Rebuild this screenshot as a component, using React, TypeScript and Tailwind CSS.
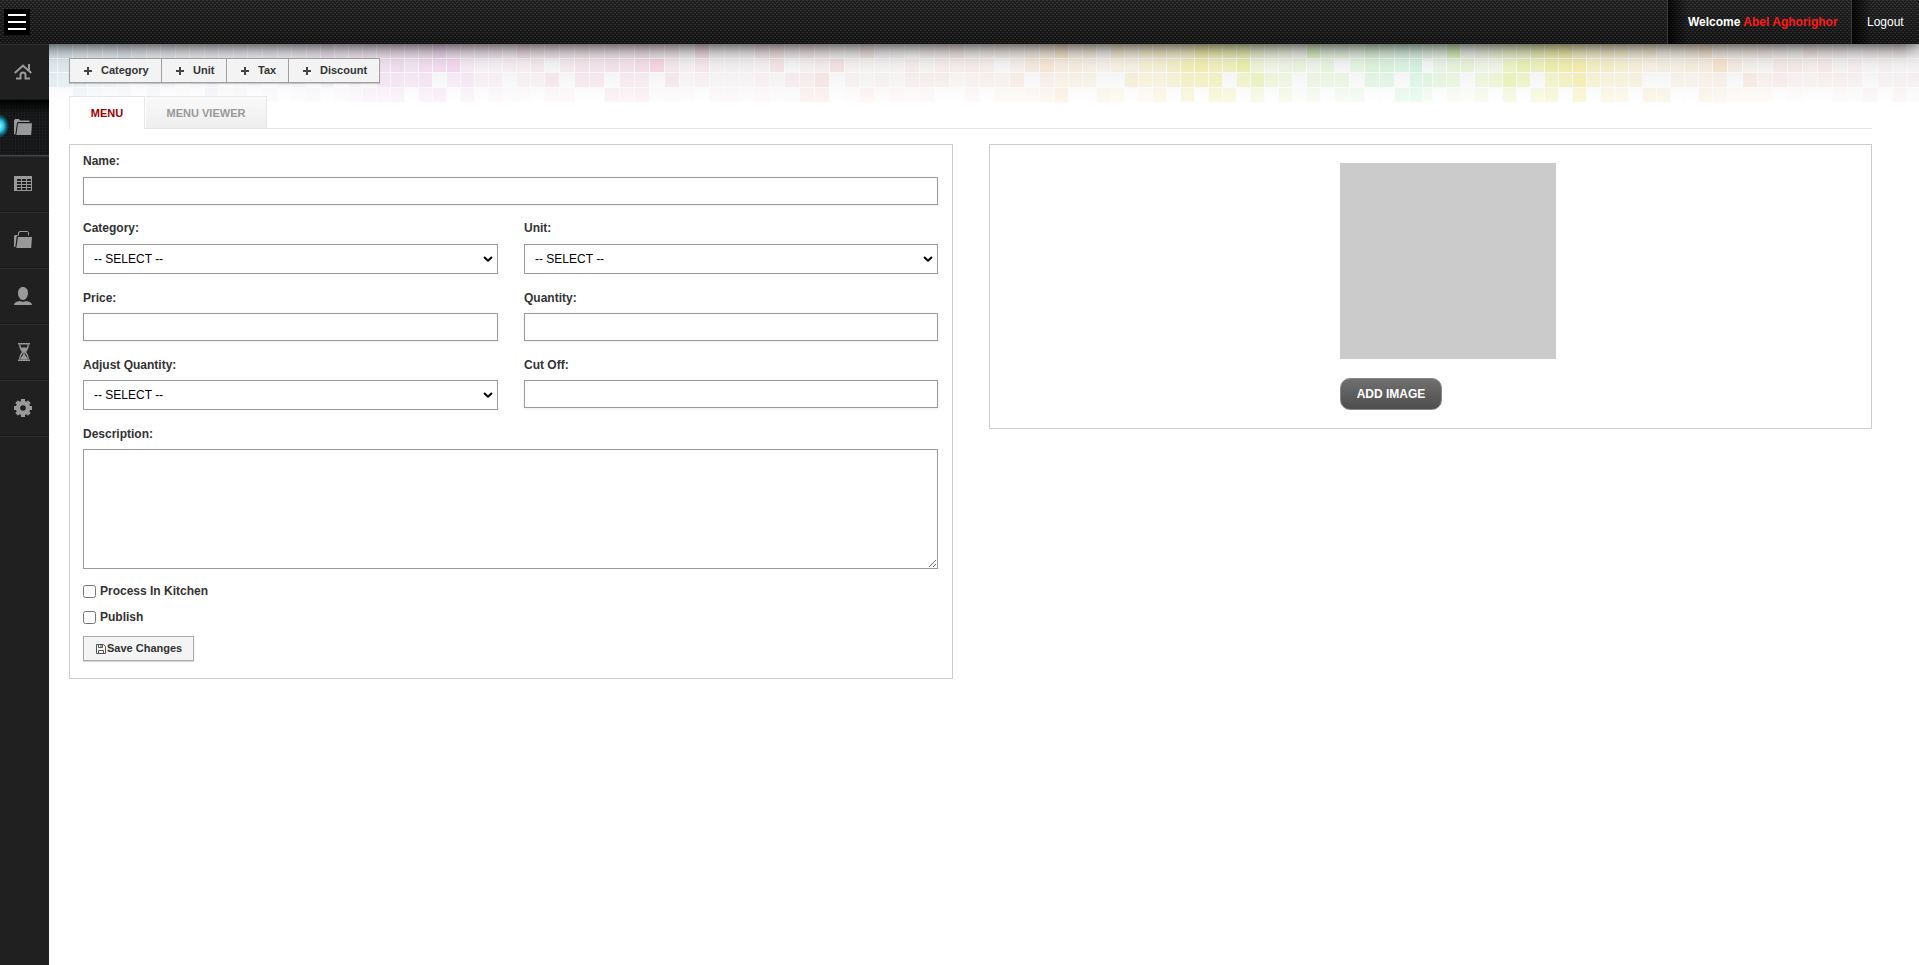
import React from "react";

type Cell = { x: number; y: number; w: number; h: number; fill: string; opacity: number };

const stops: [number, number, number, number][] = [
  [49, 168, 208, 224], [140, 190, 200, 232], [250, 206, 200, 238], [330, 228, 184, 232], [391, 236, 176, 230],
  [447, 240, 172, 228], [517, 244, 176, 206], [650, 242, 166, 196], [800, 242, 176, 176],
  [950, 244, 192, 184], [1040, 246, 200, 148], [1111, 242, 216, 136], [1195, 238, 228, 110],
  [1237, 222, 232, 110], [1279, 204, 236, 140], [1335, 184, 236, 156], [1410, 152, 234, 184],
  [1447, 184, 234, 130], [1503, 212, 236, 110], [1545, 230, 230, 108], [1573, 240, 226, 106],
  [1643, 242, 214, 136], [1713, 246, 200, 148], [1773, 244, 194, 186], [1919, 240, 200, 206],
];

const columns: [number, string][] = [
  [49, "5550"], [58, "5540"], [73, "4443"], [88, "4432"], [103, "4431"], [118, "5422"], [132, "3310"], [147, "2322"],
  [161, "3320"], [176, "2201"], [190, "2210"], [205, "3323"], [219, "2201"], [234, "3312"], [248, "2220"], [263, "3302"],
  [278, "2320"], [292, "3321"], [307, "3402"], [321, "5530"], [335, "3301"], [349, "4422"], [363, "4313"], [377, "4553"],
  [391, "4654"], [405, "4440"], [419, "5654"], [433, "6604"], [447, "4730"], [461, "3343"], [475, "3120"], [489, "3122"],
  [503, "2201"], [517, "5221"], [531, "3320"], [545, "3042"], [560, "3302"], [575, "3440"], [590, "3440"], [605, "3404"],
  [620, "3433"], [635, "4534"], [650, "3701"], [665, "3341"], [680, "1111"], [695, "5320"], [710, "1112"], [725, "1112"],
  [740, "1111"], [755, "3122"], [770, "4411"], [785, "2031"], [800, "3134"], [815, "2254"], [830, "1500"], [845, "1121"],
  [860, "4113"], [875, "1121"], [890, "1112"], [905, "0331"], [920, "2132"], [935, "2330"], [950, "4310"], [965, "1322"],
  [980, "2330"], [995, "2022"], [1010, "2242"], [1025, "3402"], [1040, "4633"], [1055, "7435"], [1069, "3430"],
  [1083, "4330"], [1097, "1203"], [1111, "6303"], [1125, "4350"], [1139, "5542"], [1153, "6544"], [1167, "5650"],
  [1181, "6876"], [1195, "9970"], [1209, "8776"], [1223, "8705"], [1237, "8960"], [1251, "5485"], [1265, "4250"],
  [1279, "3344"], [1293, "1401"], [1307, "8243"], [1321, "4440"], [1335, "4043"], [1350, "3403"], [1365, "6650"],
  [1380, "5650"], [1395, "5505"], [1410, "5655"], [1423, "4053"], [1433, "3350"], [1447, "8442"], [1461, "1401"],
  [1475, "3243"], [1489, "4250"], [1503, "5685"], [1517, "6860"], [1531, "8705"], [1545, "8966"], [1559, "9970"],
  [1573, "6997"], [1587, "5650"], [1601, "6644"], [1615, "5543"], [1629, "4440"], [1643, "5305"], [1657, "2304"],
  [1671, "3330"], [1685, "4420"], [1699, "6434"], [1713, "3733"], [1728, "2402"], [1743, "3252"], [1758, "3132"],
  [1773, "2440"], [1788, "1421"], [1803, "4320"], [1818, "2430"], [1833, "2132"], [1848, "1331"], [1863, "2103"],
  [1878, "2220"], [1893, "4123"], [1908, "1131"], [1923, "0000"],
];

const bands = [
  { y: 0, h: 14, k: 0.06 },
  { y: 15, h: 13, k: 0.058 },
  { y: 29, h: 14, k: 0.052 },
  { y: 44, h: 14, k: 0.038 },
];

function tint(x: number) {
  let i = 0;
  while (i < stops.length - 2 && stops[i + 1][0] < x) i++;
  const a = stops[i];
  const b = stops[i + 1];
  const t = Math.min(1, Math.max(0, (x - a[0]) / (b[0] - a[0])));
  const mix = (n: 1 | 2 | 3) => Math.round(a[n] + (b[n] - a[n]) * t);
  return `rgb(${mix(1)},${mix(2)},${mix(3)})`;
}

const cells: Cell[] = columns.slice(0, -1).flatMap(([x, levels], i) =>
  bands.map((band, r) => ({
    x: x - 49,
    y: band.y,
    w: columns[i + 1][0] - x - 1,
    h: band.h,
    fill: tint(x),
    opacity: Number(levels[r]) * band.k,
  })),
);

function Mosaic() {
  return (
    <svg className="absolute left-0 top-0" width="1870" height="58" shapeRendering="crispEdges" aria-hidden="true">
      <defs>
        <linearGradient id="wash" x1="0" y1="0" x2="0" y2="1">
          <stop offset="0" stopColor="#ececec" />
          <stop offset="0.5" stopColor="#f5f5f5" />
          <stop offset="1" stopColor="#ffffff" />
        </linearGradient>
      </defs>
      <rect width="1870" height="58" fill="url(#wash)" />
      {cells.map((c, i) => (
        <rect key={i} x={c.x} y={c.y} width={c.w} height={c.h} fill={c.fill} opacity={c.opacity} />
      ))}
      {[14, 28, 43].map((y) => (
        <rect key={y} x="0" y={y} width="1870" height="1" fill="#f7f9fb" opacity="0.7" />
      ))}
      {columns.map(([x]) => (
        <rect key={x} x={x - 50} y="0" width="1" height="58" fill="#f8fafc" opacity="0.5" />
      ))}
    </svg>
  );
}

const dots =
  "bg-[#171717] bg-[linear-gradient(180deg,rgba(255,255,255,0.04),rgba(0,0,0,0.15)),conic-gradient(from_0deg_at_50%_25%,#303030_25%,transparent_0),conic-gradient(from_0deg_at_50%_25%,#303030_25%,transparent_0)] bg-[size:100%_100%,4px_4px,4px_4px] bg-[position:0_0,0_0,2px_2px]";

function HomeIcon() {
  return (
    <svg width="18" height="16" viewBox="0 0 18 16" fill="none" stroke="#999" strokeWidth="2">
      <path d="M0.7 9 9 1.7 17.3 9" />
      <path d="M15 0v6.5" />
      <path d="M2 14.5h4.5V11a2.5 2.5 0 0 1 5 0v3.500h4.500" />
    </svg>
  );
}

function FolderIcon() {
  return (
    <svg width="18" height="16" viewBox="0 0 18 16" fill="#999">
      <path d="M0 1.500 1 0h4l1 1.500h9l1 1.500H4L3 4 1.300 15.500H0z" />
      <path d="M4 4.300h14l-.8 11.700H2.300z" />
    </svg>
  );
}

function TableIcon() {
  return (
    <svg width="18" height="15" viewBox="0 0 18 15" shapeRendering="crispEdges">
      <path d="M0 0h18v15H0z" fill="#999" />
      <path
        d="M3 3h4v2H3zM8 3h4v2H8zM13 3h4v2h-4zM3 6h4v2H3zM8 6h4v2H8zM13 6h4v2h-4zM3 9h4v2H3zM8 9h4v2H8zM13 9h4v2h-4zM3 12h4v2H3zM8 12h4v2H8zM13 12h4v2h-4z"
        fill="#202020"
      />
    </svg>
  );
}

function TrayIcon() {
  return (
    <svg width="18" height="17" viewBox="0 0 18 17" fill="#999">
      <path d="M4 4V1.500L5.500 0H13.500L15 1.500V4.500H14V1.500L13.500 1H6L5 2v2.500H3.500L2.700 5.500 1.300 16H0V5l1-1z" />
      <path d="M4 6h14l-.8 11H2.300z" />
    </svg>
  );
}

function UserIcon() {
  return (
    <svg width="18" height="18" viewBox="0 0 18 18" fill="#999">
      <path d="M9 0c3 0 5 2.500 5 6s-2 7-5 7-5-3.500-5-7 2-6 5-6z" />
      <path d="M0 18c0-2.500 3-3.500 6-4 1 1 5 1 6 0 3 .5 6 1.500 6 4z" />
    </svg>
  );
}

function HourglassIcon() {
  return (
    <svg width="12" height="18" viewBox="0 0 12 18" fill="none">
      <path d="M0 .8h12M0 17.200h12" stroke="#999" strokeWidth="1.600" />
      <path d="M1.800 1.500c0 4 1 5.500 3 7.500-2 2-3 3.500-3 7.500M10.200 1.500c0 4-1 5.500-3 7.500 2 2 3 3.500 3 7.500" stroke="#999" strokeWidth="1.300" />
      <path d="M2.500 4.500h7L6.700 9v2.500L9 14.500v2H3v-2l2.300-3V9z" fill="#999" />
    </svg>
  );
}

function GearIcon() {
  return (
    <svg width="18" height="18" viewBox="0 0 18 18" fill="#999">
      <path
        fillRule="evenodd"
        d="M7 0h4v2l1.600.7L14 1.300 16.700 4l-1.400 1.400L16 7h2v4h-2l-.7 1.600 1.400 1.400-2.700 2.700-1.400-1.400L11 16v2H7v-2l-1.600-.7L4 16.700 1.300 14l1.400-1.400L2 11H0V7h2l.7-1.600L1.300 4 4 1.300l1.400 1.400L7 2zM9 6.200a2.800 2.800 0 1 0 0 5.600 2.800 2.800 0 0 0 0-5.600z"
      />
    </svg>
  );
}

const navIcons = [HomeIcon, FolderIcon, TableIcon, TrayIcon, UserIcon, HourglassIcon, GearIcon];

function Sidebar() {
  return (
    <nav className="relative z-20 w-[49px] shrink-0 bg-[#202020]">
      {navIcons.map((Icon, i) => {
        const active = i === 1;
        return (
          <a
            key={i}
            href="#"
            className={
              active
                ? "relative flex h-14 items-center overflow-hidden border-b border-[#484848] bg-[#121415] bg-[linear-gradient(180deg,#000_0%,transparent_25%),repeating-linear-gradient(90deg,rgba(255,255,255,0.03)_0_1px,transparent_1px_3px),repeating-linear-gradient(0deg,rgba(255,255,255,0.02)_0_1px,transparent_1px_3px)] pl-3.5"
                : "flex h-14 items-center border-b border-t border-b-[#151515] border-t-[#2f2f2f] pl-3.5"
            }
          >
            {active && (
              <span className="absolute -left-2.5 top-3.5 h-6 w-[19px] bg-[radial-gradient(closest-side,#a8f0ff_0%,#2cc4e4_45%,rgba(14,130,160,0.7)_72%,transparent_100%)]" />
            )}
            <span className={i === 5 ? "-mt-px flex w-[18px] justify-center pl-px" : "-mt-px flex w-[18px]"}>
              <Icon />
            </span>
          </a>
        );
      })}
      <div className="h-px bg-[#2f2f2f]" />
    </nav>
  );
}

function Header() {
  return (
    <header className={`relative z-10 flex h-11 shrink-0 shadow-[0_0_20px_#000] ${dots}`}>
      <button className="ml-1 mt-[9px] flex h-[26px] w-[26px] flex-col items-center gap-[5px] bg-black pt-[5px]" aria-label="Toggle">
        <span className="h-0.5 w-[18px] bg-white" />
        <span className="h-0.5 w-[18px] bg-white" />
        <span className="h-0.5 w-[18px] bg-white" />
      </button>
      <div className="ml-auto flex text-xs text-white">
        <div className="flex w-[184px] border-l border-[#3a3a3a] bg-[linear-gradient(90deg,rgba(0,0,0,0.8),transparent_20px)] pl-5 pt-3.5 font-bold leading-4">
          <span>
            Welcome <span className="text-[#ff1a1a]">Abel Aghorighor</span>
          </span>
        </div>
        <a href="#" className="w-[68px] border-l border-[#3a3a3a] bg-[linear-gradient(90deg,rgba(0,0,0,0.8),transparent_20px)] pl-[15px] pt-3.5 leading-4">
          Logout
        </a>
      </div>
    </header>
  );
}

function Plus() {
  return (
    <svg width="8" height="8" viewBox="0 0 8 8" shapeRendering="crispEdges" fill="#444">
      <path d="M3 0h2v3h3v2H5v3H3V5H0V3h3z" />
    </svg>
  );
}

const toolbar = [
  { label: "Category", width: "w-[92px]" },
  { label: "Unit", width: "w-[65px]" },
  { label: "Tax", width: "w-[62px]" },
  { label: "Discount", width: "w-[91px]" },
];

function Toolbar() {
  return (
    <div className="flex h-[25px] w-[311px] border border-r-0 border-[#a0a0a0] bg-[#f3f3f3] shadow-[0_1px_1px_rgba(0,0,0,0.18)]">
      {toolbar.map(({ label, width }) => (
        <button key={label} className={`flex items-center gap-[9px] whitespace-nowrap border-r border-[#a0a0a0] pl-3.5 text-[11px] font-bold leading-4 text-[#333] ${width}`}>
          <Plus />
          <span className="-mt-0.5">{label}</span>
        </button>
      ))}
    </div>
  );
}

function Tabs() {
  return (
    <div className="relative mt-[13px] flex h-[33px] w-[1803px] border-b border-[#e8e8e8] text-[11px] font-bold leading-4">
      <button className="h-[33px] w-[76px] border border-b-0 border-[#e8e8e8] bg-white text-[#900]">MENU</button>
      <button className="h-8 w-[122px] border border-b-0 border-[#e8e8e8] border-l-white bg-linear-to-b from-[#fafafa] to-[#eee] text-[#999]">
        MENU VIEWER
      </button>
    </div>
  );
}

const inputClass = "block h-7 w-full border border-[#999] bg-white px-2 text-xs shadow-[0_1px_3px_#eee] outline-none";

function Label({ children }: { children: React.ReactNode }) {
  return <label className="block h-4 whitespace-nowrap text-xs font-bold leading-4 text-[#333]">{children}</label>;
}

function Select() {
  return (
    <div className="flex h-[30px] items-center justify-between border border-[#999] bg-white pl-2.5 pr-1 text-xs text-black">
      <span>-- SELECT --</span>
      <svg width="10" height="6" viewBox="0 0 10 6" fill="none" stroke="#000" strokeWidth="2">
        <path d="M1 1l4 3.700L9 1" />
      </svg>
    </div>
  );
}

function Check({ children }: { children: React.ReactNode }) {
  return (
    <label className="flex h-[13px] items-center gap-1 text-xs font-bold leading-4 text-[#333]">
      <input type="checkbox" className="m-0 h-[13px] w-[13px]" />
      <span className="-mt-px">{children}</span>
    </label>
  );
}

function SaveIcon() {
  return (
    <svg width="10" height="10" viewBox="0 0 10 10" fill="none" stroke="#555">
      <path d="M.5 .5h7l2 2v7h-9z" />
      <path d="M2.500 .5v3h4v-3M2.500 9.500v-3h5v3" />
      <path d="M5 1v2" />
    </svg>
  );
}

function MenuForm() {
  return (
    <form className="h-[535px] w-[884px] border border-[#ccc] bg-white pl-[13px] pr-3.5 pt-2">
      <Label>Name:</Label>
      <input className={`mt-2 ${inputClass}`} />
      <div className="mt-[15px] grid grid-cols-[415px_414px] gap-x-[26px] gap-y-4">
        <div>
          <Label>Category:</Label>
          <div className="mt-2"><Select /></div>
        </div>
        <div>
          <Label>Unit:</Label>
          <div className="mt-2"><Select /></div>
        </div>
        <div>
          <Label>Price:</Label>
          <input className={`mt-[7px] ${inputClass}`} />
        </div>
        <div>
          <Label>Quantity:</Label>
          <input className={`mt-[7px] ${inputClass}`} />
        </div>
        <div>
          <Label>Adjust Quantity:</Label>
          <div className="mt-[7px]"><Select /></div>
        </div>
        <div>
          <Label>Cut Off:</Label>
          <input className={`mt-[7px] ${inputClass}`} />
        </div>
      </div>
      <div className="mt-4">
        <Label>Description:</Label>
        <textarea className="mt-[7px] block h-[120px] w-full resize border border-[#999] bg-white outline-none" />
      </div>
      <div className="mt-4 flex flex-col gap-[13px]">
        <Check>Process In Kitchen</Check>
        <Check>Publish</Check>
      </div>
      <button type="button" className="mt-3 flex h-[25px] w-[111px] items-center whitespace-nowrap border border-[#aaa] bg-[#f4f4f4] pl-3 text-[11px] font-bold leading-4 text-[#333] shadow-[0_1px_1px_rgba(0,0,0,0.15)]">
        <SaveIcon />
        <span className="-mt-px ml-px">Save Changes</span>
      </button>
    </form>
  );
}

function ImagePanel() {
  return (
    <section className="flex h-[285px] w-[883px] flex-col border border-[#ccc] bg-white pl-[350px] pt-[18px]">
      <div className="h-[196px] w-[216px] bg-[#cbcbcb]" />
      <button className="mt-[19px] h-8 w-[102px] rounded-[10px] border border-[#888] bg-linear-to-b from-[#707070] to-[#4e4e4e] text-xs font-bold text-white">
        ADD IMAGE
      </button>
    </section>
  );
}

export default function App() {
  return (
    <div className="flex h-[965px] w-full flex-col overflow-hidden bg-white font-['Liberation_Sans',Arial,sans-serif]">
      <Header />
      <div className="flex min-h-0 flex-1">
        <Sidebar />
        <main className="relative min-w-0 flex-1">
          <Mosaic />
          <div className="relative z-10 pl-5 pt-3.5">
            <Toolbar />
            <Tabs />
            <div className="mt-[15px] flex items-start gap-9">
              <MenuForm />
              <ImagePanel />
            </div>
          </div>
        </main>
      </div>
    </div>
  );
}
